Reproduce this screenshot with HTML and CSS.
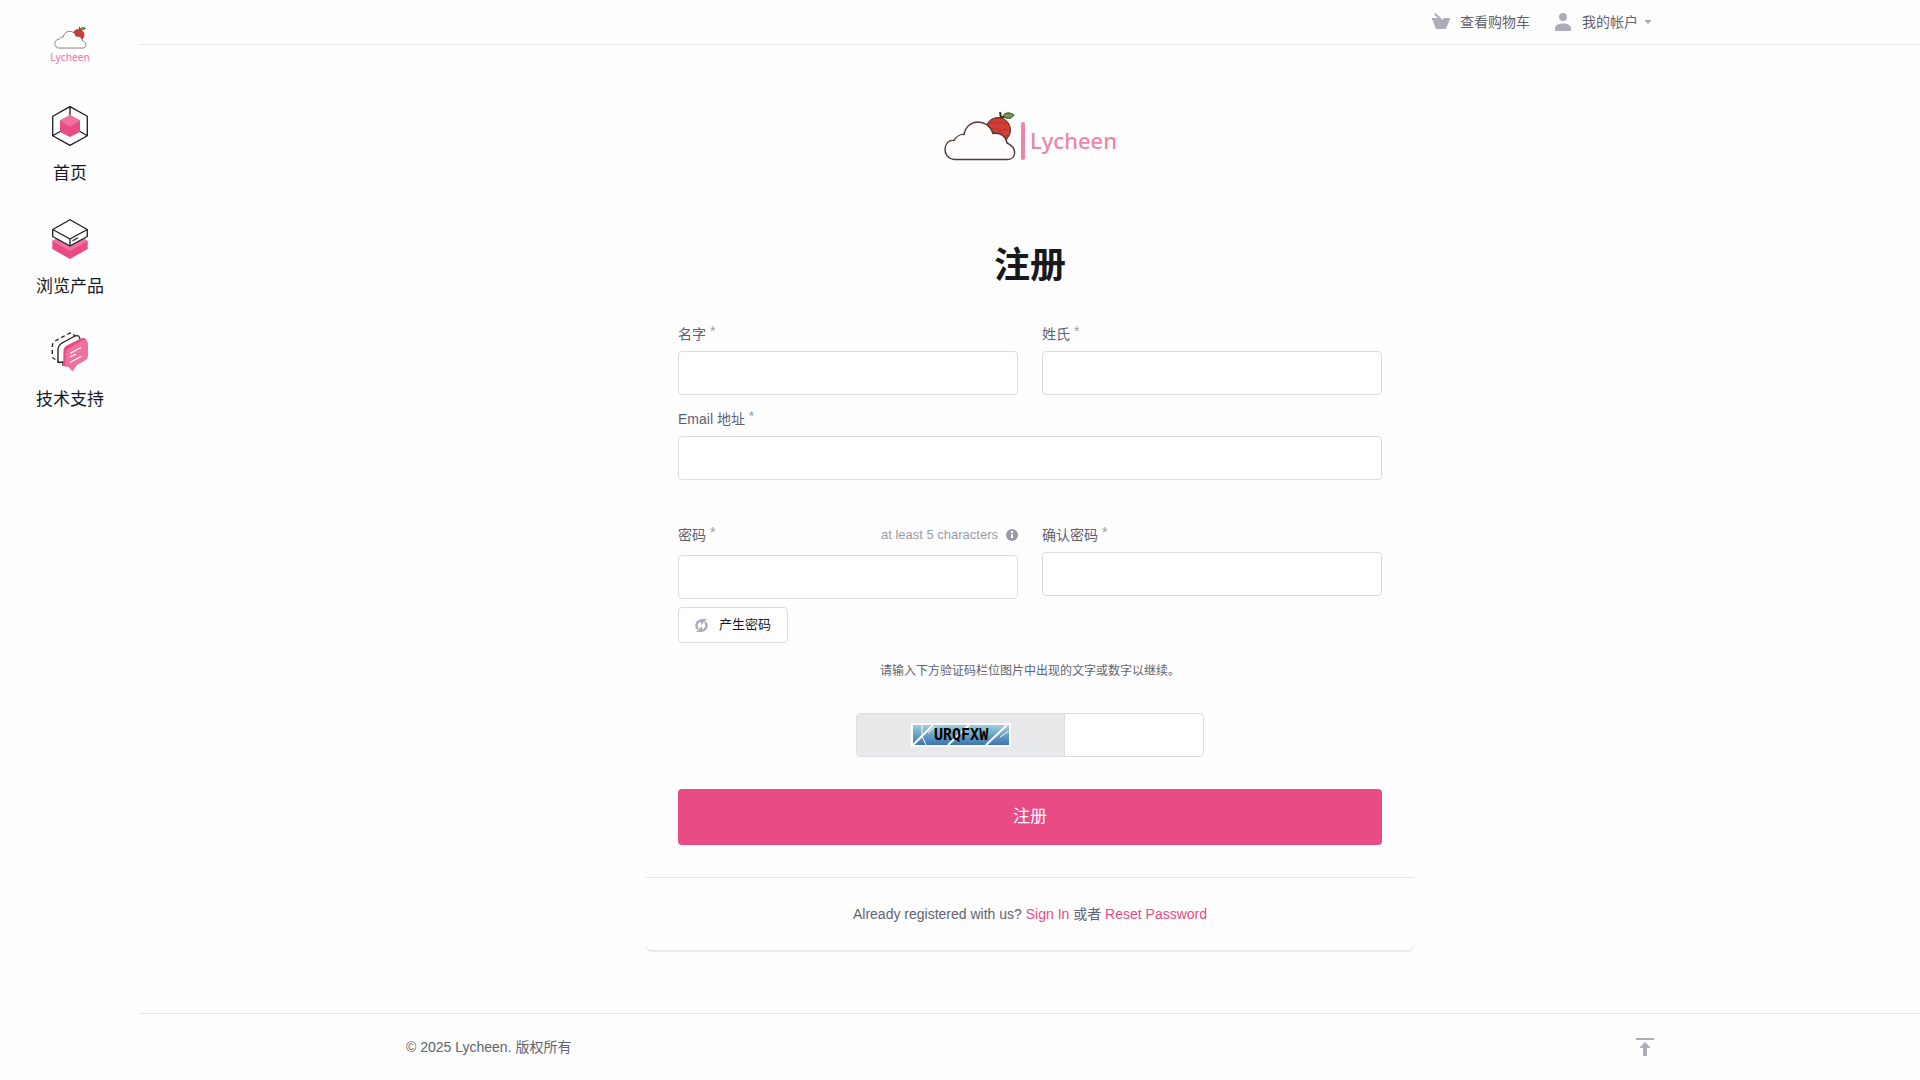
FILE: index.html
```html
<!DOCTYPE html>
<html lang="zh-CN">
<head>
<meta charset="utf-8">
<title>注册 - Lycheen</title>
<link rel="stylesheet" href="styles.css">
</head>
<body>
<svg class="defs" aria-hidden="true">
  <symbol id="cloud" viewBox="0 0 74 52">
    <circle cx="55" cy="19" r="12.500" fill="#cf3f36" stroke="#5a2320"/>
    <path d="M46 13l4-2 4 2 4-2 5 2M48 18l5-1 4 3 5-2 4 1M53 24l5-1 3 3 5-2M60 29l5-1" fill="none" stroke="#a92a28" stroke-width=".7"/>
    <path d="M58 7L57 1M58 6L63 6" fill="none" stroke="#4a2c1c" stroke-width="2"/>
    <path d="M60 5C62 1 67 1 71 4C68 9 63 8 60 5Z" fill="#6f9a43" stroke="#37491f"/>
    <path d="M11 48.500C-2 47 0 28 11 29.500C13 26 17 23 21 23.500C24 7 45 7 50 22.500C58 21 63 26 64 32C75 37 73 48 65 48.500Z" fill="#fffefd" stroke="#4e3735" stroke-width="1.400"/>
  </symbol>
</svg>
<div class="layout">
  <aside class="sidebar">
    <a class="brand" href="#" aria-label="Lycheen">
      <svg class="brand-cloud"><use href="#cloud"/></svg>
      <span class="brand-name">Lycheen</span>
    </a>
    <nav class="menu">
      <a href="#">
        <svg width="40" height="40" viewBox="0 0 40 40" fill="none" stroke="#1b1d22" stroke-width="1.300" stroke-linejoin="round">
          <path d="M20 .6L37.300 10.300V29.700L20 39.400 2.700 29.700V10.300ZM20 1V10M3 29.500L11 25M37 29.500L29 25"/>
          <path d="M20 9l10 5.500v11.500L20 31 10 26V14.500Z" fill="#e94b85" stroke="none"/>
          <path d="M20 9l10 5.500L20 21 10 14.500Z" fill="#f0709f" stroke="none"/>
        </svg>
        <span>首页</span>
      </a>
      <a href="#">
        <svg width="40" height="40" viewBox="0 0 40 40" fill="none" stroke="#1b1d22" stroke-width="1.300" stroke-linejoin="round">
          <path d="M2.300 22L20 12l17.700 10v8L20 40 2.300 30Z" fill="#e94b85" stroke="none"/>
          <path d="M2.300 22L20 12l17.700 10L20 32Z" fill="#f0709f" stroke="none"/>
          <path d="M2.700 10.500L20 .7l17.300 9.800v7L20 27 2.700 17.500Z" fill="#fff"/>
          <path d="M2.700 10.500L20 20l17.300-9.500M20 20v7M22.500 21.800l5.500-3"/>
        </svg>
        <span>浏览产品</span>
      </a>
      <a href="#">
        <svg width="40" height="40" viewBox="0 0 40 40" fill="none" stroke="#1b1d22" stroke-width="1.300" stroke-linejoin="round">
          <path d="M25 6C24 1 22 0 19 1.500L6 8.500C3 10 2.300 12 2.300 15v8C2.300 27 4 28 8 26.500V31" stroke-dasharray="4 3"/>
          <path d="M13 34V30L9 30.500C7.500 30 8 27 8 25V18C8 15 9 13 12 11L24 4.500C28 2.500 30 4 30 8" fill="#fff"/>
          <path d="M13.500 34C13 30 13.500 24 13.500 19c0-3 1-4 4-6L31 6.500c2-1 4-.5 5.500 1L20 35Z" fill="#e94b85" stroke="none"/>
          <path d="M15.500 23c0-4 1-5.500 4-7L32 8.500c4-2 6-.5 6 4V22c0 4-1 5.500-4 7l-7 4-4.500 6.500-4-4.500C15.500 35 15.500 34 15.500 31Z" fill="#f0709f" stroke="none"/>
          <path d="M20 21.500l11-6M20 25l6-3M20 30.500l11-6" stroke="#fff"/>
        </svg>
        <span>技术支持</span>
      </a>
    </nav>
  </aside>
  <div class="page">
    <header class="topbar">
      <div class="container topbar-links">
        <a href="#">
          <svg width="18" height="18" viewBox="0 0 18 18" fill="#acadba"><path d="M0 5h6L2 1.500 3.500 0 9 5l1 2L12 5h6v2h-.5L14 16H4L.5 7H0Z"/></svg>
          查看购物车
        </a>
        <a href="#">
          <svg width="18" height="18" viewBox="0 0 18 18" fill="#acadba"><circle cx="9" cy="4" r="4"/><path d="M1 18V15c0-3 4-4.500 8-4.500s8 1.500 8 4.500v3Z"/></svg>
          我的帐户
          <svg class="caret" width="6" height="4" viewBox="0 0 6 4" fill="#acadba"><path d="M0 0h6v1L3 4 0 1Z"/></svg>
        </a>
      </div>
    </header>
    <main class="main">
      <a class="logo" href="#" aria-label="Lycheen">
        <svg class="logo-cloud"><use href="#cloud"/></svg>
        <i class="logo-bar"></i>
        <span class="logo-name">Lycheen</span>
      </a>
      <form class="card">
        <div class="card-body">
          <h1>注册</h1>
          <div class="row">
            <div class="field"><label for="first">名字 <span class="req">*</span></label><input class="control" id="first" type="text"></div>
            <div class="field"><label for="last">姓氏 <span class="req">*</span></label><input class="control" id="last" type="text"></div>
          </div>
          <div class="field"><label for="email">Email 地址 <span class="req">*</span></label><input class="control" id="email" type="email"></div>
          <div class="row passwords">
            <div class="field">
              <div class="label-line">
                <label for="pw">密码 <span class="req">*</span></label>
                <span class="hint">at least 5 characters
                  <svg width="12" height="12" viewBox="0 0 12 12"><circle cx="6" cy="6" r="6" fill="#999ca7"/><path d="M5 2h2v2H5ZM5 5h2v4H5Z" fill="#fff"/></svg>
                </span>
              </div>
              <input class="control" id="pw" type="password">
              <button class="generate" type="button">
                <svg width="13" height="13" viewBox="0 0 13 13" fill="none" stroke="#acadba" stroke-width="2.400"><path d="M3 10C0 7 1.500 1.500 7 1.500M10 3C13 6 11.500 11.500 6 11.500"/><path d="M6 0h6L6 6ZM7 13H1L7 7Z" fill="#acadba" stroke="none"/></svg>
                产生密码
              </button>
            </div>
            <div class="field"><label for="confirm">确认密码 <span class="req">*</span></label><input class="control" id="confirm" type="password"></div>
          </div>
          <label class="captcha-note" for="captcha">请输入下方验证码栏位图片中出现的文字或数字以继续。</label>
          <div class="captcha">
            <div class="captcha-pic">
              <svg width="100" height="24" viewBox="0 0 100 24">
                <defs><linearGradient id="sky" x2="0" y2="1"><stop stop-color="#9ccfdc"/><stop offset="1" stop-color="#3974b0"/></linearGradient></defs>
                <path d="M0 0h100v24H0Z" fill="#fff"/><path d="M2 2h96v20H2Z" fill="url(#sky)"/>
                <path d="M2 22L22 2M37 22L58 2M75 22L96 2" stroke="#fff" stroke-width="2"/>
                <path d="M11 2v11l4 9M17 10l7-6M89 14l9-6" fill="none" stroke="#fff"/>
                <text class="captcha-code" x="23" y="17">URQFXW</text>
              </svg>
            </div>
            <input id="captcha" type="text">
          </div>
          <button class="submit" type="submit">注册</button>
        </div>
        <div class="card-footer">Already registered with us? <a href="#">Sign In</a> 或者 <a href="#">Reset Password</a></div>
      </form>
    </main>
    <footer class="footer">
      <div class="container footer-row">
        <span>© 2025 Lycheen. 版权所有</span>
        <a href="#" aria-label="Top"><svg width="18" height="18" viewBox="0 0 18 18" fill="#acadba"><path d="M0 0h18v2H0ZM9 4l5 5v1h-3v8H7v-8H4V9Z"/></svg></a>
      </div>
    </footer>
  </div>
</div>
</body>
</html>
```
FILE: styles.css
```css
* { box-sizing: border-box; }
body {
  margin: 0;
  background: #fefefe;
  color: #5e6270;
  font: 14px/20px "Liberation Sans", "Noto Sans CJK SC", sans-serif;
}
a { color: inherit; text-decoration: none; }
svg { display: block; flex: none; }
input, button { font: inherit; }
.defs { position: absolute; width: 0; height: 0; }
.layout { display: flex; min-height: 100vh; }

.sidebar { width: 140px; flex: none; padding-top: 26px; }
.brand { display: flex; flex-direction: column; align-items: center; color: #ec84ae; }
.brand-cloud { width: 33px; height: 24px; }
.brand-name { font: 500 10px/14px "Noto Sans", sans-serif; }
.menu { display: flex; flex-direction: column; gap: 33px; padding-top: 42px; }
.menu a {
  display: flex;
  flex-direction: column;
  align-items: center;
  gap: 16px;
  color: #17191e;
  font-size: 17px;
  line-height: 24px;
}

.page { flex: 1; min-width: 0; display: flex; flex-direction: column; }
.container { width: 100%; max-width: 1250px; margin: 0 auto; }
.topbar { border-bottom: 1px solid #e7e7e9; }
.topbar-links { display: flex; justify-content: flex-end; gap: 24px; height: 44px; padding-right: 4px; }
.topbar-links a { display: flex; align-items: center; gap: 10px; }
.caret { margin-left: -3px; }

.main { flex: 1; display: flex; flex-direction: column; align-items: center; padding: 66px 24px 60px; }
.logo { display: flex; align-items: center; height: 52px; color: #ec84ae; }
.logo-cloud { width: 74px; height: 52px; }
.logo-bar { width: 4px; height: 38px; margin: 8px 5px 0 4px; border-radius: 2px; background: currentColor; }
.logo-name { padding-top: 6px; font: 500 22px/32px "Noto Sans", sans-serif; }

.card { width: 100%; max-width: 768px; margin-top: 48px; border-radius: 6px; background: #fefefe; box-shadow: 0 2px 1px #e9e9eb; }
.card-body { padding: 32px; }
h1 { margin: 1px 0 36px; color: #17191e; font-size: 36px; line-height: 44px; text-align: center; }
.row { display: grid; grid-template-columns: 1fr 1fr; align-items: start; gap: 24px; }
.field { display: flex; flex-direction: column; margin-bottom: 14px; }
label { display: block; margin-bottom: 7px; }
.req { color: #999ca7; line-height: 0; vertical-align: 3px; }
.control { width: 100%; height: 44px; padding: 0 12px; border: 1px solid #dcdde1; border-radius: 4px; background: #fff; }
.passwords { margin-top: 45px; }
.passwords .field { margin-bottom: 0; }
.label-line { display: flex; justify-content: space-between; margin-bottom: 3px; }
.hint { display: flex; align-items: center; gap: 8px; height: 20px; color: #999ca7; font-size: 13px; }
.generate {
  display: flex;
  align-items: center;
  align-self: flex-start;
  gap: 11px;
  height: 36px;
  margin-top: 8px;
  padding: 0 16px;
  border: 1px solid #dcdde1;
  border-radius: 4px;
  background: #fff;
  color: #17191e;
  font-size: 13px;
}
.captcha-note { margin: 18px 0 32px; font-size: 12px; text-align: center; }
.captcha { display: flex; width: 348px; height: 44px; margin: 0 auto 32px; border: 1px solid #dcdde1; border-radius: 4px; overflow: hidden; background: #fff; }
.captcha-pic { flex: 0 0 208px; display: grid; place-items: center; background: #e8e9eb; border-right: 1px solid #dcdde1; }
.captcha-code { font: 700 15px "DejaVu Sans Mono", monospace; fill: #000; }
.captcha input { flex: 1; min-width: 0; border: 0; padding: 0 12px; background: none; }
.submit { display: block; width: 100%; height: 56px; border: 0; border-radius: 4px; background: #e94b85; color: #fff; font-size: 17px; }
.card-footer { padding: 26px 32px; border-top: 1px solid #e7e7e9; text-align: center; }
.card-footer a { color: #e94b85; }

.footer { border-top: 1px solid #e7e7e9; }
.footer-row { display: flex; align-items: center; justify-content: space-between; height: 66px; padding: 0 1px; }
```
